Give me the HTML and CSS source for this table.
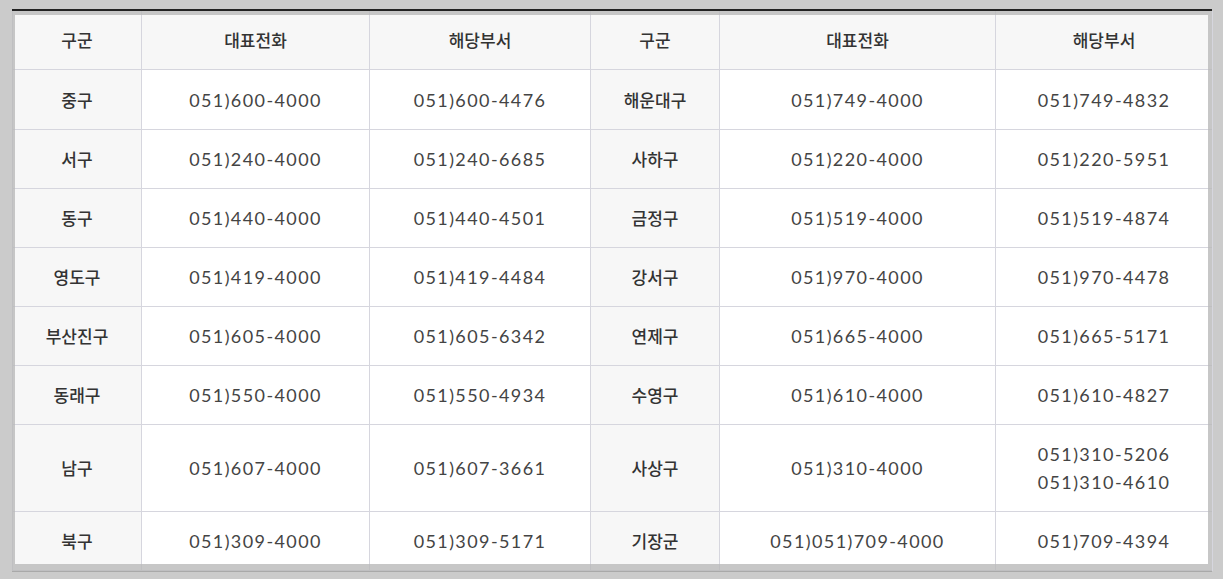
FILE: index.html
```html
<!DOCTYPE html>
<html lang="ko">
<head>
    <meta charset="UTF-8">
    <meta name="viewport" content="width=device-width, initial-scale=1.0">
    <title>구군 대표전화</title>
    <link rel="stylesheet" href="styles.css">
</head>
<body>
    <div class="board">
        <table class="phone-table">
            <colgroup>
                <col class="c-gu">
                <col class="c-main">
                <col class="c-dept">
                <col class="c-gu">
                <col class="c-main2">
                <col class="c-dept2">
            </colgroup>
            <thead>
                <tr>
                    <th>구군</th>
                    <th>대표전화</th>
                    <th>해당부서</th>
                    <th>구군</th>
                    <th>대표전화</th>
                    <th>해당부서</th>
                </tr>
            </thead>
            <tbody>
                <tr>
                    <th>중구</th><td>051)600-4000</td><td>051)600-4476</td>
                    <th>해운대구</th><td>051)749-4000</td><td>051)749-4832</td>
                </tr>
                <tr>
                    <th>서구</th><td>051)240-4000</td><td>051)240-6685</td>
                    <th>사하구</th><td>051)220-4000</td><td>051)220-5951</td>
                </tr>
                <tr>
                    <th>동구</th><td>051)440-4000</td><td>051)440-4501</td>
                    <th>금정구</th><td>051)519-4000</td><td>051)519-4874</td>
                </tr>
                <tr>
                    <th>영도구</th><td>051)419-4000</td><td>051)419-4484</td>
                    <th>강서구</th><td>051)970-4000</td><td>051)970-4478</td>
                </tr>
                <tr>
                    <th>부산진구</th><td>051)605-4000</td><td>051)605-6342</td>
                    <th>연제구</th><td>051)665-4000</td><td>051)665-5171</td>
                </tr>
                <tr>
                    <th>동래구</th><td>051)550-4000</td><td>051)550-4934</td>
                    <th>수영구</th><td>051)610-4000</td><td>051)610-4827</td>
                </tr>
                <tr>
                    <th>남구</th><td>051)607-4000</td><td>051)607-3661</td>
                    <th>사상구</th><td>051)310-4000</td><td>051)310-5206<br>051)310-4610</td>
                </tr>
                <tr>
                    <th>북구</th><td>051)309-4000</td><td>051)309-5171</td>
                    <th>기장군</th><td>051)051)709-4000</td><td>051)709-4394</td>
                </tr>
            </tbody>
        </table>
    </div>
</body>
</html>
```

FILE: styles.css
```css
body {
    margin: 0;
    padding: 9px 11px 0 12px;
    background-color: #cbcbcb;
    font-family: 'Noto Sans CJK KR', sans-serif;
    color: #333;
}

.board {
    position: relative;
    border-top: 2px solid #222;
    border-bottom: 1px solid #a9a9a9;
}

/* grey frame lying over the table edges */
.board::after {
    content: '';
    position: absolute;
    top: 0;
    left: 0;
    right: 0;
    bottom: 0;
    border-style: solid;
    border-width: 4px 4px 7px 3px;
    border-color: rgba(185, 185, 185, 0.8);
    pointer-events: none;
}

.phone-table {
    width: 100%;
    table-layout: fixed;
    border-collapse: collapse;
    background-color: #fff;
}

.c-gu { width: 129px; }
.c-main { width: 228px; }
.c-dept { width: 221px; }
.c-main2 { width: 276px; }
.c-dept2 { width: 217px; }

.phone-table th,
.phone-table td {
    padding: 15px 0;
    line-height: 28px;
    text-align: center;
    border: 1px solid #d6d6de;
}

.phone-table thead th {
    border-top: none;
}

.phone-table tbody tr:first-child th,
.phone-table tbody tr:first-child td {
    padding-top: 16px;
}

.phone-table th {
    background-color: #f7f7f7;
    font-size: 17px;
    font-weight: 500;
    color: #333;
}

.phone-table td {
    font-family: 'Lato', sans-serif;
    font-size: 18px;
    font-weight: 400;
    letter-spacing: 1.4px;
    color: #444;
}
```
